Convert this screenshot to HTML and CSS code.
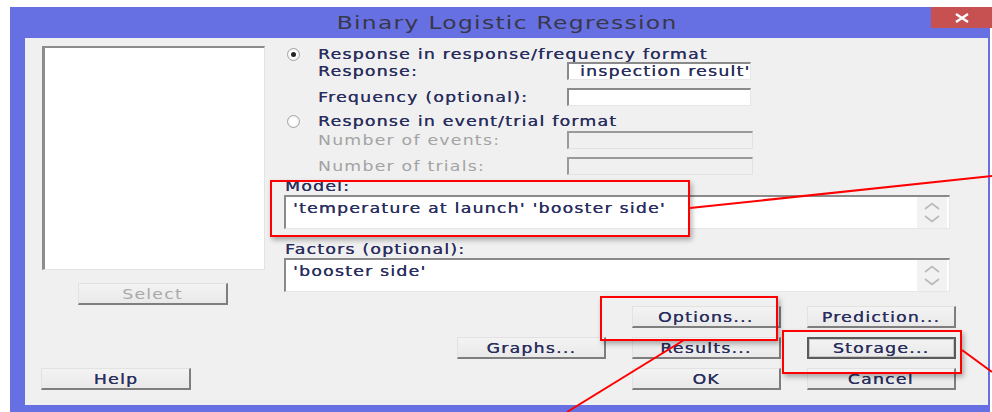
FILE: index.html
```html
<!DOCTYPE html>
<html lang="en">
<head>
    <meta charset="UTF-8">
    <title>Binary Logistic Regression</title>
    <link rel="stylesheet" href="styles.css">
</head>
<body>
    <div class="window">
        <div class="titlebar">
            <div class="title"><span class="t">Binary Logistic Regression</span></div>
            <div class="close">
                <svg width="16" height="10" viewBox="0 0 16 10"><path d="M2 1 L14 9 M14 1 L2 9" stroke="#fff" stroke-width="2.4"/></svg>
            </div>
        </div>
        <div class="client">
            <!-- Variable list -->
            <div class="left-col">
                <div class="listbox"></div>
                <button class="btn btn-select" disabled><span class="t">Select</span></button>
                <button class="btn btn-help"><span class="t">Help</span></button>
            </div>

            <div class="right-col">
                <div class="radio-row">
                    <span class="radio checked"></span>
                    <span class="t">Response in response/frequency format</span>
                </div>
                <div class="field-row">
                    <label><span class="t">Response:</span></label>
                    <div class="input"><span class="t">inspection result'</span></div>
                </div>
                <div class="field-row row-freq">
                    <label><span class="t">Frequency (optional):</span></label>
                    <div class="input"></div>
                </div>

                <div class="radio-row row-radio2">
                    <span class="radio"></span>
                    <span class="t">Response in event/trial format</span>
                </div>
                <div class="field-row row-events disabled">
                    <label><span class="t">Number of events:</span></label>
                    <div class="input input-off"></div>
                </div>
                <div class="field-row row-trials disabled">
                    <label><span class="t">Number of trials:</span></label>
                    <div class="input input-off"></div>
                </div>

                <div class="section-label"><span class="t">Model:</span></div>
                <div class="textbox">
                    <div class="textbox-text"><span class="t">'temperature at launch' 'booster side'</span></div>
                    <div class="scroll">
                        <svg width="16" height="8" viewBox="0 0 16 8"><polyline points="1,7 8,1.5 15,7" fill="none" stroke="#b9b9b9" stroke-width="1.6"/></svg>
                        <svg width="16" height="8" viewBox="0 0 16 8"><polyline points="1,1 8,6.5 15,1" fill="none" stroke="#b9b9b9" stroke-width="1.6"/></svg>
                    </div>
                </div>

                <div class="section-label label-factors"><span class="t">Factors (optional):</span></div>
                <div class="textbox">
                    <div class="textbox-text"><span class="t">'booster side'</span></div>
                    <div class="scroll">
                        <svg width="16" height="8" viewBox="0 0 16 8"><polyline points="1,7 8,1.5 15,7" fill="none" stroke="#b9b9b9" stroke-width="1.6"/></svg>
                        <svg width="16" height="8" viewBox="0 0 16 8"><polyline points="1,1 8,6.5 15,1" fill="none" stroke="#b9b9b9" stroke-width="1.6"/></svg>
                    </div>
                </div>

                <div class="button-grid">
                    <span></span>
                    <button class="btn"><span class="t">Options...</span></button>
                    <button class="btn"><span class="t">Prediction...</span></button>
                    <button class="btn"><span class="t">Graphs...</span></button>
                    <button class="btn"><span class="t">Results...</span></button>
                    <button class="btn btn-default"><span class="t">Storage...</span></button>
                    <span></span>
                    <button class="btn"><span class="t">OK</span></button>
                    <button class="btn"><span class="t">Cancel</span></button>
                </div>
            </div>
        </div>
    </div>

    <!-- annotation marks -->
    <div class="mark mark-model"></div>
    <div class="mark mark-options"></div>
    <div class="mark mark-storage"></div>
    <svg class="mark-lines" width="992" height="412" viewBox="0 0 992 412">
        <line x1="690" y1="208" x2="992" y2="176" stroke="#f00" stroke-width="2"/>
        <line x1="684" y1="340" x2="567" y2="412" stroke="#f00" stroke-width="2"/>
        <line x1="962" y1="350" x2="992" y2="372" stroke="#f00" stroke-width="2"/>
    </svg>
</body>
</html>
```

FILE: styles.css
```css
body {
    margin: 0;
    width: 992px;
    height: 412px;
    overflow: hidden;
    position: relative;
    background-color: #fff;
    font-family: "DejaVu Sans", Verdana, sans-serif;
    font-size: 14px;
    letter-spacing: 1px;
    color: #2a2e5e;
}

/* the screenshot is stretched sideways, so is the text */
.t {
    display: inline-block;
    white-space: nowrap;
    transform: scaleX(1.235);
    transform-origin: 0 50%;
    text-shadow: 0.25px 0 0 currentColor;
}

.window {
    margin: 7px 2px 0 10px;
    height: 405px;
    background-color: #6670e2;
    display: flex;
    flex-direction: column;
}

.titlebar {
    height: 31px;
    display: flex;
    align-items: flex-start;
}

.title {
    flex: 1;
    text-align: center;
    padding-left: 73px;
    line-height: 31px;
    font-size: 18px;
    color: #383848;
}

.title .t {
    transform: scaleX(1.3);
    transform-origin: 50% 50%;
    text-shadow: none;
}

.close {
    width: 61px;
    height: 21px;
    margin-right: -2px;
    background-color: #c75050;
    display: flex;
    align-items: center;
    justify-content: center;
}

.client {
    flex: 1;
    margin: 0 2px 7px 15px;
    padding-top: 8px;
    background-color: #f0f0f0;
    display: flex;
}

.left-col {
    width: 242px;
    padding-left: 17px;
    display: flex;
    flex-direction: column;
    align-items: flex-start;
}

.listbox {
    width: 223px;
    height: 224px;
    box-sizing: border-box;
    background-color: #fff;
    border-style: solid;
    border-width: 2px 1px 1px 3px;
    border-color: #8c8c8c #e3e3e3 #e3e3e3 #8c8c8c;
}

.btn {
    width: 150px;
    height: 22px;
    box-sizing: border-box;
    padding: 0;
    font-family: "DejaVu Sans", Verdana, sans-serif;
    font-size: 14px;
    letter-spacing: 1px;
    line-height: 18px;
    color: #2a2e5e;
    background: linear-gradient(#f3f3f3, #e9e9e9);
    border-style: solid;
    border-width: 1px 2px 2px 1px;
    border-color: #e2e2e2 #7e7e7e #7e7e7e #e2e2e2;
}

.btn .t {
    transform-origin: 50% 50%;
}

.btn-select {
    margin: 13px 0 0 36px;
    color: #a9a9a9;
}

.btn-select .t {
    text-shadow: none;
}

.btn-help {
    margin: 63px 0 0 -1px;
}

.btn-default {
    border: 2px solid #5a5a5a;
    box-shadow: inset 0 0 0 1px #c9c9c9;
}

.right-col {
    width: 671px;
}

.radio-row {
    height: 16px;
    display: flex;
    align-items: center;
}

.row-radio2 {
    margin-top: 7px;
}

.radio {
    width: 13px;
    height: 13px;
    margin: 0 18px 0 3px;
    box-sizing: border-box;
    border-radius: 50%;
    border: 1px solid #a4a4a4;
    background: radial-gradient(#ffffff 40%, #e4e4e4);
    display: flex;
    align-items: center;
    justify-content: center;
}

.radio.checked::after {
    content: "";
    width: 5px;
    height: 5px;
    border-radius: 50%;
    background-color: #222;
}

.field-row {
    height: 18px;
    padding-left: 34px;
    display: flex;
    align-items: center;
}

.field-row label {
    width: 249px;
}

.row-freq {
    margin-top: 8px;
}

.row-events {
    margin-top: 2px;
}

.row-trials {
    margin-top: 8px;
}

.disabled label {
    color: #a3a3a3;
}

.disabled .t {
    text-shadow: none;
}

.input {
    width: 184px;
    height: 18px;
    box-sizing: border-box;
    padding-left: 11px;
    line-height: 15px;
    background-color: #fff;
    border-style: solid;
    border-width: 2px 1px 1px 2px;
    border-color: #8a8a8a #e6e6e6 #e6e6e6 #8a8a8a;
    white-space: nowrap;
    overflow: hidden;
}

.input-off {
    width: 186px;
    background-color: #f0f0f0;
    border-color: #9a9a9a #e2e2e2 #e2e2e2 #9a9a9a;
}

.section-label {
    margin-top: 3px;
    height: 17px;
    line-height: 17px;
    padding-left: 1px;
}

.label-factors {
    margin-top: 12px;
}

.textbox {
    width: 666px;
    height: 34px;
    box-sizing: border-box;
    background-color: #fff;
    border-style: solid;
    border-width: 2px 1px 1px 2px;
    border-color: #8a8a8a #e6e6e6 #e6e6e6 #8a8a8a;
    display: flex;
}

.textbox-text {
    flex: 1;
    padding: 3px 0 0 7px;
    line-height: 16px;
}

.scroll {
    width: 30px;
    margin-right: 2px;
    background-color: #f2f2f2;
    display: flex;
    flex-direction: column;
    align-items: center;
    justify-content: center;
    gap: 5px;
}

.button-grid {
    margin: 14px 0 0 173px;
    display: grid;
    grid-template-columns: repeat(3, 149px);
    grid-template-rows: repeat(3, 22px);
    column-gap: 26px;
    row-gap: 9px;
}

.button-grid .btn {
    width: 149px;
}

.mark {
    position: absolute;
    box-sizing: border-box;
    border: 2px solid #f00;
    box-shadow: 2px 3px 5px rgba(0, 0, 0, 0.3);
}

.mark-model {
    left: 270px;
    top: 180px;
    width: 420px;
    height: 57px;
}

.mark-options {
    left: 600px;
    top: 296px;
    width: 178px;
    height: 45px;
}

.mark-storage {
    left: 782px;
    top: 330px;
    width: 180px;
    height: 44px;
}

.mark-lines {
    position: absolute;
    left: 0;
    top: 0;
    pointer-events: none;
}
```
